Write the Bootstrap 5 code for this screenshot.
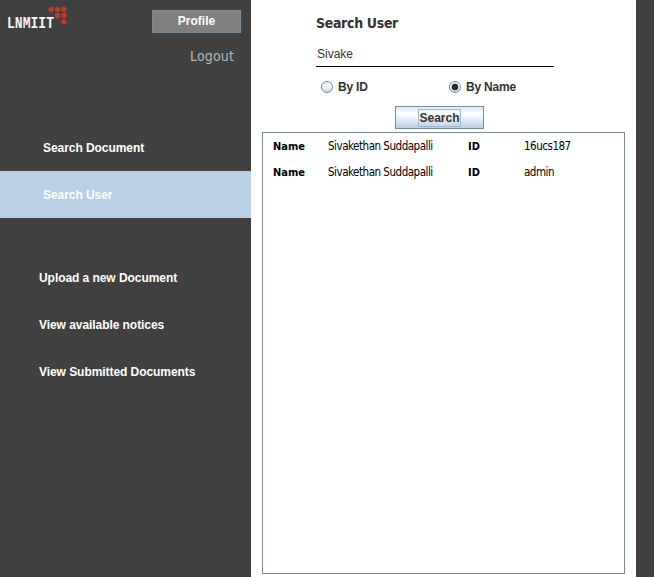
<!DOCTYPE html>
<html lang="en">
<head>
<meta charset="utf-8">
<meta name="viewport" content="width=device-width, initial-scale=1">
<title>Search User</title>
<link href="https://cdn.jsdelivr.net/npm/bootstrap@5.3.0/dist/css/bootstrap.min.css" rel="stylesheet">
<style>
body { font: bold 12px/16px "Liberation Sans", Arial, sans-serif; color: #333; background: #404040; height: 577px; }
.sidebar { width: 251px; }
.brand-row { height: 124px; padding: 6px 10px 0 6px; }
.btn-profile { width: 89px; height: 23px; padding: 0; border: 1px solid #7a8a99; border-radius: 0; background: #808080 !important; color: #fff !important; font: bold 12px/21px "Liberation Sans", Arial, sans-serif; }
.logout { font: 14px/18px "DejaVu Sans Condensed", "DejaVu Sans", sans-serif; font-stretch: condensed; color: #b8b8b8; letter-spacing: .15px; margin: 14px 7px 0 0; }
.side-link { height: 47px; padding: 0 0 0 43px; color: #fff; display: flex; align-items: center; border-radius: 0; letter-spacing: -.06px; }
.side-link:hover { color: #fff; }
.side-link.active { background: #b8cfe5; }
.more-links { margin-top: 36px; }
.more-links .side-link { padding-left: 39px; }
.main-pane { width: 385px; padding: 13px 11px 3px; }
.heading { font: bold 14px/20px "DejaVu Sans Condensed", "DejaVu Sans", sans-serif; font-stretch: condensed; margin-left: 54px; letter-spacing: -.33px; }
.query { width: 238px; height: 25px; margin: 9px 0 0 54px; padding: 1px 1px 1px; border: 0; border-bottom: 1px solid #000; border-radius: 0; background: transparent; color: #333; font: 12px/16px "Liberation Sans", Arial, sans-serif; }
.query:focus { box-shadow: none; }
.choices { margin: 12px 0 0 59px; height: 16px; }
.choice { width: 128px; gap: 5px; letter-spacing: -.2px; }
.choice .form-check-input { width: 12px; height: 12px; margin: 0; border: 1px solid #7a8a99; background: linear-gradient(#e4edf6, #fff 35%, #c5d8ea); }
.choice .form-check-input:checked { background: radial-gradient(circle at center, #2b2b33 0 3px, transparent 3.7px), linear-gradient(#e4edf6, #fff 35%, #c5d8ea); }
.btn-search { width: 89px; height: 23px; margin: 11px 0 0 133px; padding: 0; border: 1px solid #7a8a99; border-radius: 0; background: linear-gradient(#dde8f3, #fff 33%, #b8cfe5) !important; color: #333 !important; font: bold 12px/16px "Liberation Sans", Arial, sans-serif; }
.btn-search span { display: block; width: 43px; height: 18px; border: 1px solid #a3b8cc; margin: 0 auto; line-height: 17px; }
.results { margin-top: 3px; border: 1px solid #7a8a99; padding: 0 0 0 10px; font: 11px/27px "DejaVu Sans Condensed", "DejaVu Sans", sans-serif; font-stretch: condensed; color: #000; }
.hit { height: 26px; display: grid; grid-template-columns: 55px 140px 56px 1fr; white-space: nowrap; }
.hit dt { line-height: inherit; font-weight: bold; }
.hit dd { margin: 0; font-size: 11.5px; letter-spacing: -.48px; }
</style>
</head>
<body class="d-flex overflow-hidden">
<aside class="sidebar flex-shrink-0">
  <div class="brand-row d-flex justify-content-between align-items-start">
    <svg width="64" height="34" viewBox="0 0 64 34" role="img" aria-label="LNMIIT">
      <text transform="translate(1 22.3) scale(1 1.15)" textLength="47" lengthAdjust="spacingAndGlyphs" font-family="Liberation Mono, monospace" font-size="14" font-weight="bold" fill="#f4f4f4">LNMIIT</text>
      <g fill="#d8301c"><circle cx="45.2" cy="3.3" r="2.6"/><circle cx="51.5" cy="3.3" r="2.6"/><circle cx="57.9" cy="3.3" r="2.6"/><circle cx="51.5" cy="9.4" r="2.6"/><circle cx="57.9" cy="9.4" r="2.6"/><circle cx="57.9" cy="15.8" r="2.6"/></g>
    </svg>
    <div class="d-flex flex-column align-items-end pt-1">
      <button class="btn btn-profile">Profile</button>
      <a class="logout text-decoration-none" href="#">Logout</a>
    </div>
  </div>
  <nav class="nav flex-column">
    <a class="nav-link side-link" href="#">Search Document</a>
    <a class="nav-link side-link active" href="#">Search User</a>
  </nav>
  <nav class="nav flex-column more-links">
    <a class="nav-link side-link" href="#">Upload a new Document</a>
    <a class="nav-link side-link" href="#">View available notices</a>
    <a class="nav-link side-link" href="#">View Submitted Documents</a>
  </nav>
</aside>
<main class="main-pane bg-white d-flex flex-column flex-shrink-0">
  <h1 class="heading mb-0">Search User</h1>
  <input class="form-control query" value="Sivake" aria-label="User">
  <div class="choices d-flex">
    <label class="choice d-flex align-items-center"><input class="form-check-input" type="radio" name="by">By ID</label>
    <label class="choice d-flex align-items-center"><input class="form-check-input" type="radio" name="by" checked>By Name</label>
  </div>
  <button class="btn btn-search flex-shrink-0"><span>Search</span></button>
  <section class="results flex-grow-1">
    <dl class="hit mb-0"><dt>Name</dt><dd>Sivakethan Suddapalli</dd><dt>ID</dt><dd>16ucs187</dd></dl>
    <dl class="hit mb-0"><dt>Name</dt><dd>Sivakethan Suddapalli</dd><dt>ID</dt><dd>admin</dd></dl>
  </section>
</main>
<script src="https://cdn.jsdelivr.net/npm/bootstrap@5.3.0/dist/js/bootstrap.bundle.min.js"></script>
</body>
</html>
